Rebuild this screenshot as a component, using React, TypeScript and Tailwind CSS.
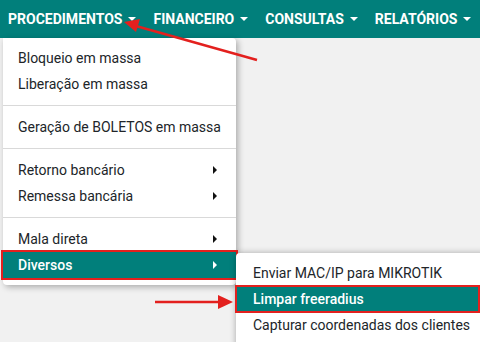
import React from 'react';

const navItems = ['PROCEDIMENTOS', 'FINANCEIRO', 'CONSULTAS', 'RELATÓRIOS'];

function Caret() {
    return <span className="ml-[6px] inline-block h-0 w-0 border-x-[4px] border-t-[4px] border-x-transparent border-t-white align-middle" />;
}

function SideCaret({ light }: { light?: boolean }) {
    return (
        <span
            className={`inline-block h-0 w-0 border-y-[4px] border-l-[4px] border-y-transparent ${light ? 'border-l-white' : 'border-l-[#111]'}`}
        />
    );
}

type Item = { label: string; sub?: boolean; active?: boolean } | 'sep';

const items: Item[] = [
    { label: 'Bloqueio em massa' },
    { label: 'Liberação em massa' },
    'sep',
    { label: 'Geração de BOLETOS em massa' },
    'sep',
    { label: 'Retorno bancário', sub: true },
    { label: 'Remessa bancária', sub: true },
    'sep',
    { label: 'Mala direta', sub: true },
    { label: 'Diversos', sub: true, active: true },
];

const subItems = [
    { label: 'Enviar MAC/IP para MIKROTIK' },
    { label: 'Limpar freeradius', active: true },
    { label: 'Capturar coordenadas dos clientes' },
];

export default function App() {
    return (
        <div className="relative h-[342px] w-[480px] overflow-hidden bg-[#f1f1f1] font-['Roboto',sans-serif] text-[14px] text-[#212529]">
            {/* Top nav */}
            <nav className="flex h-[38px] items-center whitespace-nowrap bg-[#017f7b] pl-[8px] text-[14px] font-bold text-white">
                {navItems.map((n) => (
                    <div key={n} className="mr-[17px] flex items-center">
                        <span>{n}</span>
                        <Caret />
                    </div>
                ))}
            </nav>

            {/* Dropdown */}
            <div className="absolute left-[3px] top-[38px] w-[233px] whitespace-nowrap rounded-b-[4px] rounded-tr-[4px] bg-white py-[7px] shadow-[2px_2px_6px_rgba(0,0,0,0.3)]">
                {items.map((it, i) =>
                    it === 'sep' ? (
                        <div key={i} className="flex h-[17px] items-center">
                            <div className="h-px w-full bg-[#d9d9d9]" />
                        </div>
                    ) : (
                        <div
                            key={i}
                            className={`flex h-[26px] items-center justify-between pl-[15px] pr-[19px] ${it.active ? 'bg-[#017f7b] font-medium text-white outline-2 outline-[#e3201e]' : ''}`}
                        >
                            <span>{it.label}</span>
                            {it.sub && <SideCaret light={it.active} />}
                        </div>
                    )
                )}
            </div>

            {/* Sub dropdown */}
            <div className="absolute left-[236px] top-[253px] h-[100px] w-[250px] whitespace-nowrap rounded-tl-[4px] bg-white pt-[7px] shadow-[0_0_6px_rgba(0,0,0,0.3)]">
                {subItems.map((s) => (
                    <div
                        key={s.label}
                        className={`flex h-[26px] w-[243px] items-center pl-[17px] ${s.active ? 'bg-[#017f7b] font-medium text-white outline-2 -outline-offset-1 outline-[#e3201e]' : ''}`}
                    >
                        {s.label}
                    </div>
                ))}
            </div>

            {/* Annotation arrows */}
            <svg className="pointer-events-none absolute left-0 top-0" width="480" height="342">
                <line x1="257" y1="60" x2="136" y2="26" stroke="#e3201e" strokeWidth="2.5" />
                <polygon points="124,22 140,19 136,32" fill="#e3201e" />
                <line x1="155" y1="302" x2="222" y2="302" stroke="#e3201e" strokeWidth="2.5" />
                <polygon points="233,302 218,295 218,309" fill="#e3201e" />
            </svg>
        </div>
    );
}
